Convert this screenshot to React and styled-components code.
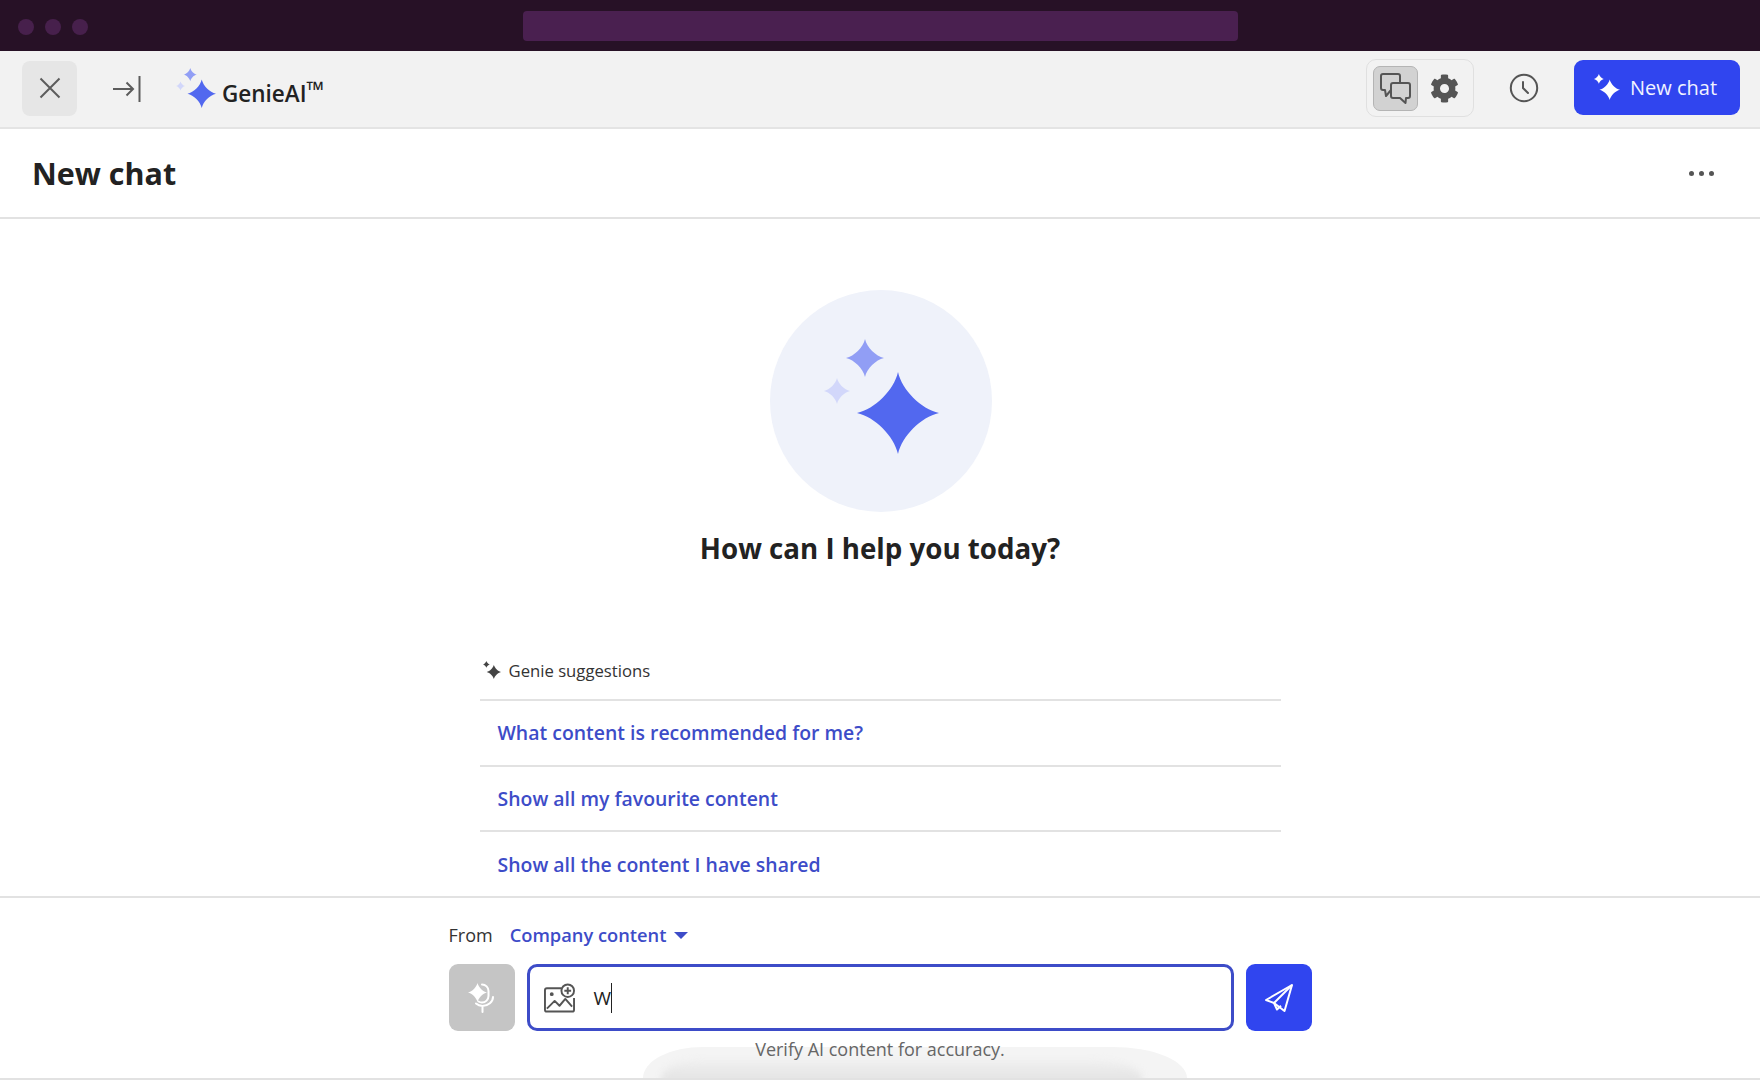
import React from "react";
import styled, { createGlobalStyle } from "styled-components";
import { FaCog } from "react-icons/fa";

const GlobalStyle = createGlobalStyle`
  html, body {
    margin: 0;
    padding: 0;
    background: #fff;
  }
  body {
    font-family: "Open Sans", "Liberation Sans", sans-serif;
    color: #222;
  }
  * {
    box-sizing: border-box;
  }
`;

const STAR = "M50 0 C55 22 78 45 100 50 C78 55 55 78 50 100 C45 78 22 55 0 50 C22 45 45 22 50 0Z";

const Window = styled.div`
  position: relative;
  width: 1760px;
  height: 1080px;
  display: flex;
  flex-direction: column;
  overflow: hidden;
  background: #fff;
  border-bottom: 2px solid #e2e2e2;
`;

const TitleBar = styled.div`
  flex: 0 0 51px;
  display: flex;
  align-items: center;
  position: relative;
  padding: 2px 0 0 18px;
  gap: 11px;
  background: #271126;
`;

const Light = styled.span`
  width: 16px;
  height: 16px;
  border-radius: 50%;
  background: #47204c;
`;

const AddressBar = styled.div`
  position: absolute;
  left: 523px;
  top: 11px;
  width: 715px;
  height: 30px;
  border-radius: 4px;
  background: #4a2050;
`;

const Toolbar = styled.div`
  flex: 0 0 78px;
  display: flex;
  align-items: center;
  padding: 0 20px 2px 22px;
  background: #f2f2f2;
  border-bottom: 2px solid #e4e4e4;
`;

const CloseButton = styled.button`
  width: 55px;
  height: 55px;
  padding: 0;
  border: 0;
  border-radius: 8px;
  background: #e6e6e6;
  display: flex;
  align-items: center;
  justify-content: center;
`;

const Collapse = styled.button`
  margin: 2px 0 0 35px;
  width: 30px;
  height: 30px;
  padding: 0;
  border: 0;
  background: none;
  display: flex;
  align-items: center;
`;

const Brand = styled.div`
  margin-left: 34px;
  display: flex;
  align-items: center;
`;

const BrandName = styled.span`
  margin: 11px 0 0 6px;
  font-size: 22.5px;
  line-height: 30px;
  font-weight: 600;
  color: #222;
  sup {
    font-size: 23px;
    line-height: 0;
    vertical-align: 4px;
  }
`;

const Spacer = styled.div`
  flex: 1;
`;

const ToggleGroup = styled.div`
  width: 108px;
  height: 58px;
  padding: 6px;
  display: flex;
  align-items: center;
  gap: 4px;
  border: 1px solid #e0e0e0;
  border-radius: 10px;
`;

const ToggleItem = styled.button`
  width: 45px;
  height: 45px;
  padding: 0;
  display: flex;
  align-items: center;
  justify-content: center;
  border-radius: 7px;
  border: 1px solid ${props => (props.active ? "#b4b4b4" : "transparent")};
  background: ${props => (props.active ? "#d2d2d2" : "transparent")};
  color: #555;
`;

const HistoryButton = styled.button`
  margin: 0 35px;
  width: 30px;
  height: 30px;
  padding: 0;
  border: 0;
  background: none;
  display: flex;
  align-items: center;
  justify-content: center;
`;

const NewChatButton = styled.button`
  width: 166px;
  height: 55px;
  margin-bottom: 2px;
  padding: 0 0 0 20px;
  display: flex;
  align-items: center;
  gap: 10px;
  border: 0;
  border-radius: 9px;
  background: #3045ef;
  color: #f1f3ff;
  font-family: inherit;
  font-size: 20px;
  font-weight: 500;
`;

const ChatHeader = styled.div`
  flex: 0 0 90px;
  display: flex;
  align-items: center;
  justify-content: space-between;
  padding: 0 46px 0 32px;
  border-bottom: 2px solid #e2e2e2;
`;

const ChatTitle = styled.h1`
  margin: 0;
  font-size: 30.5px;
  line-height: 44px;
  font-weight: 700;
  color: #222;
`;

const MoreDots = styled.div`
  display: flex;
  gap: 5px;
  span {
    width: 5px;
    height: 5px;
    border-radius: 50%;
    background: #555;
  }
`;

const Main = styled.main`
  flex: 1;
  display: flex;
  flex-direction: column;
  align-items: center;
  padding-top: 71px;
`;

const HeroCircle = styled.div`
  width: 222px;
  height: 222px;
  margin-left: 2px;
  padding-bottom: 9px;
  border-radius: 50%;
  background: #eff2fa;
  display: flex;
  align-items: center;
  justify-content: center;
`;

const Greeting = styled.h2`
  margin: 16px 0 0;
  font-size: 27.7px;
  line-height: 40px;
  font-weight: 700;
  color: #222;
`;

const Suggestions = styled.section`
  margin-top: 81px;
  width: 801px;
`;

const SuggestionsHead = styled.div`
  height: 52px;
  display: flex;
  align-items: center;
  gap: 8px;
  padding: 0 0 8px 3px;
  font-size: 16.7px;
  color: #333;
  border-bottom: 2px solid #e2e2e2;
`;

const Suggestion = styled.a`
  display: flex;
  align-items: center;
  height: ${props => (props.last ? "64px" : "65.5px")};
  padding-left: 18px;
  font-size: 19.45px;
  font-weight: 600;
  color: #3d4cc8;
  border-bottom: ${props => (props.last ? "0" : "2px solid #e2e2e2")};
`;

const Composer = styled.footer`
  flex: 0 0 182px;
  position: relative;
  border-top: 2px solid #e2e2e2;
  display: flex;
  flex-direction: column;
  align-items: center;
`;

const ComposerInner = styled.div`
  position: relative;
  z-index: 1;
  width: 863px;
`;

const Source = styled.div`
  height: 66px;
  display: flex;
  align-items: center;
  padding-top: 7px;
  font-size: 18px;
  color: #333;
`;

const SourcePicker = styled.button`
  margin-left: 17px;
  padding: 0;
  border: 0;
  background: none;
  display: flex;
  align-items: center;
  gap: 8px;
  font-family: inherit;
  font-size: 18.3px;
  font-weight: 600;
  color: #3d4cc8;
`;

const Caret = styled.span`
  width: 0;
  height: 0;
  margin-top: 2px;
  border-left: 7px solid transparent;
  border-right: 7px solid transparent;
  border-top: 7px solid #3d4cc8;
`;

const InputRow = styled.div`
  display: flex;
  gap: 12px;
`;

const SquareButton = styled.button`
  flex: 0 0 66px;
  height: 67px;
  padding: 0;
  border: 0;
  border-radius: 9px;
  background: ${props => (props.primary ? "#3045ef" : "#c5c5c5")};
  display: flex;
  align-items: center;
  justify-content: center;
`;

const InputBox = styled.div`
  flex: 1;
  height: 67px;
  display: flex;
  align-items: center;
  padding-left: 14px;
  gap: 19px;
  border: 3px solid #3d4cc8;
  border-radius: 10px;
  background: #fff;
`;

const Typed = styled.span`
  font-size: 19px;
  line-height: 30px;
  color: #222;
  border-right: 1px solid #222;
`;

const Disclaimer = styled.div`
  margin-top: 6px;
  text-align: center;
  font-size: 18px;
  line-height: 25px;
  color: #666;
`;

const BottomGlow = styled.div`
  position: absolute;
  left: 643px;
  top: 149px;
  width: 544px;
  height: 31px;
  overflow: hidden;
  border-radius: 60px 75px 0 0 / 31px 31px 0 0;
  background: #f4f4f4;
  &::after {
    content: "";
    position: absolute;
    left: 18px;
    right: 45px;
    top: 13px;
    bottom: -6px;
    border-radius: 40px 50px 0 0 / 18px 18px 0 0;
    background: linear-gradient(#f0f0f0, #e2e2e2);
    filter: blur(3px);
  }
`;

function Sparkles({ size }) {
  return (
    <svg width={size} height={size} viewBox="0 0 115 115" style={{ display: "block" }}>
      <g transform="translate(33 33) scale(.82)">
        <path d={STAR} fill="#5268ef" />
      </g>
      <g transform="translate(22 0) scale(.38)">
        <path d={STAR} fill="#919ef5" />
      </g>
      <g transform="translate(0 39) scale(.26)">
        <path d={STAR} fill="#d2d7fa" />
      </g>
    </svg>
  );
}

function SmallSparkle({ color, size }) {
  return (
    <svg width={size} height={size} viewBox="0 0 24 24" style={{ display: "block" }}>
      <g transform="translate(5 5) scale(.19)">
        <path d={STAR} fill={color} />
      </g>
      <g transform="translate(0 0) scale(.09)">
        <path d={STAR} fill={color} />
      </g>
    </svg>
  );
}

function App() {
  return (
    <Window>
      <GlobalStyle />
      <TitleBar>
        <Light />
        <Light />
        <Light />
        <AddressBar />
      </TitleBar>
      <Toolbar>
        <CloseButton aria-label="Close">
          <svg width="24" height="24" viewBox="0 0 24 24" fill="none" stroke="#5c5c5c" strokeWidth="2">
            <path d="M2.5 2.5 L21.5 21.5 M21.5 2.5 L2.5 21.5" />
          </svg>
        </CloseButton>
        <Collapse aria-label="Collapse">
          <svg width="30" height="30" viewBox="0 0 30 30" fill="none" stroke="#5c5c5c" strokeWidth="2">
            <path d="M1 15 H21 M14.5 8.5 L21 15 L14.5 21.5" />
            <path d="M27.5 2 V28" />
          </svg>
        </Collapse>
        <Brand>
          <Sparkles size={40} />
          <BrandName>
            GenieAI<sup>™</sup>
          </BrandName>
        </Brand>
        <Spacer />
        <ToggleGroup>
          <ToggleItem active aria-label="Chat">
            <svg width="34" height="34" viewBox="0 0 34 34" fill="none" stroke="#555" strokeWidth="2" strokeLinejoin="round">
              <path d="M21 11 V5 a2 2 0 0 0 -2 -2 H4 a2 2 0 0 0 -2 2 V17 a2 2 0 0 0 2 2 H6 L7 25 L12 19" />
              <path d="M14 12 H29 a2 2 0 0 1 2 2 V25 a2 2 0 0 1 -2 2 H27 L26.5 32 L21 27 H14 a2 2 0 0 1 -2 -2 V14 a2 2 0 0 1 2 -2 Z" />
            </svg>
          </ToggleItem>
          <ToggleItem aria-label="Settings">
            <FaCog size={29} color="#555" />
          </ToggleItem>
        </ToggleGroup>
        <HistoryButton aria-label="History">
          <svg width="30" height="30" viewBox="0 0 30 30" fill="none" stroke="#555" strokeWidth="2" strokeLinecap="round">
            <circle cx="15" cy="15" r="13.2" />
            <path d="M14 9 V15 L19 20" />
          </svg>
        </HistoryButton>
        <NewChatButton>
          <SmallSparkle color="#fff" size={26} />
          New chat
        </NewChatButton>
      </Toolbar>
      <ChatHeader>
        <ChatTitle>New chat</ChatTitle>
        <MoreDots>
          <span />
          <span />
          <span />
        </MoreDots>
      </ChatHeader>
      <Main>
        <HeroCircle>
          <Sparkles size={115} />
        </HeroCircle>
        <Greeting>How can I help you today?</Greeting>
        <Suggestions>
          <SuggestionsHead>
            <SmallSparkle color="#444" size={18} />
            Genie suggestions
          </SuggestionsHead>
          <Suggestion>What content is recommended for me?</Suggestion>
          <Suggestion>Show all my favourite content</Suggestion>
          <Suggestion last>Show all the content I have shared</Suggestion>
        </Suggestions>
      </Main>
      <Composer>
        <BottomGlow />
        <ComposerInner>
          <Source>
            From
            <SourcePicker>
              Company content
              <Caret />
            </SourcePicker>
          </Source>
          <InputRow>
            <SquareButton aria-label="Voice">
              <svg width="28" height="30" viewBox="0 0 28 30" fill="none" stroke="#fff" strokeWidth="2" strokeLinecap="round">
                <path d="M14 1.5 a6.5 6.5 0 0 1 6.5 6.5 V13 a6.5 6.5 0 0 1 -6.5 6.5 a6.5 6.5 0 0 1 -3.5 -1" />
                <path d="M25 14 a10.5 9 0 0 1 -10.5 9 a10.5 9 0 0 1 -6.5 -2.5 M14.5 23 V29" />
                <g transform="translate(0 0) scale(.19)" stroke="none">
                  <path d={STAR} fill="#fff" />
                </g>
              </svg>
            </SquareButton>
            <InputBox>
              <svg width="31" height="30" viewBox="0 0 32 30" fill="none" stroke="#555" strokeWidth="2" strokeLinejoin="round">
                <path d="M18 5 H3 a2 2 0 0 0 -2 2 V27 a2 2 0 0 0 2 2 H29 a2 2 0 0 0 2 -2 V15" />
                <path d="M3 26 L11 18 L16 23 L22 16 L29 24" />
                <circle cx="8" cy="11" r="1" fill="#555" />
                <circle cx="24.5" cy="7.5" r="6.5" />
                <path d="M24.5 4 V11 M21 7.5 H28" />
              </svg>
              <Typed>W</Typed>
            </InputBox>
            <SquareButton primary aria-label="Send">
              <svg width="30" height="30" viewBox="0 0 30 30" fill="none" stroke="#fff" strokeWidth="2" strokeLinejoin="round">
                <path d="M2 17 L28 2 L20.5 28 L10 20 Z" />
                <path d="M10 20 L28 2" />
                <path d="M10 20 L13 26.5 L17 22.8" />
              </svg>
            </SquareButton>
          </InputRow>
          <Disclaimer>Verify AI content for accuracy.</Disclaimer>
        </ComposerInner>
      </Composer>
    </Window>
  );
}

export default App;
